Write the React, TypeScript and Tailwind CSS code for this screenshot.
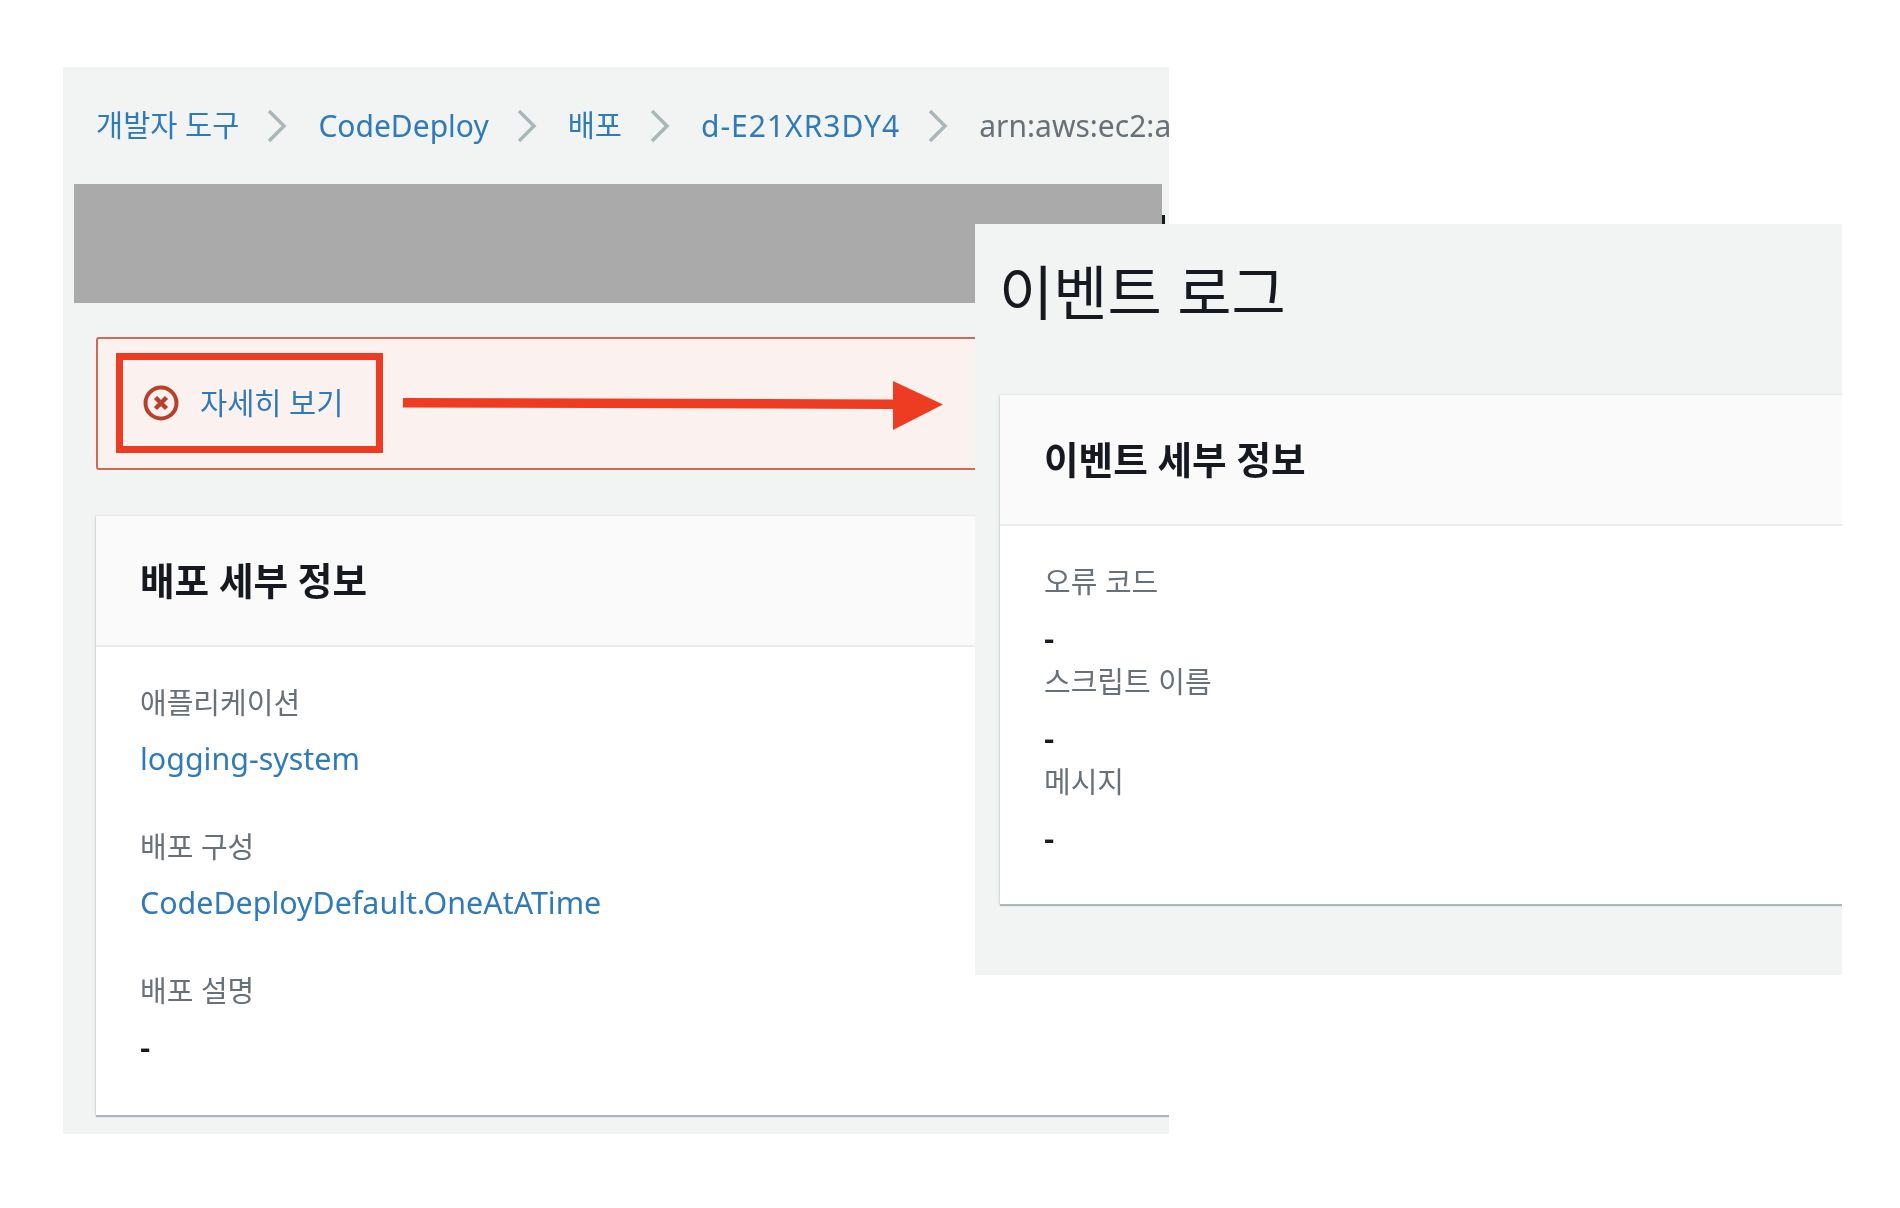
const font = 'font-["Noto_Sans","Noto_Sans_CJK_KR",sans-serif]'

function Chevron() {
  return (
    <svg width="20" height="34" viewBox="0 0 20 34" fill="none" className="shrink-0 mr-[3px]">
      <path d="M2 2l15 15L2 32" stroke="#aab7b8" strokeWidth="3.5" />
    </svg>
  )
}

function ErrorIcon() {
  return (
    <svg width="36" height="36" viewBox="0 0 36 36" fill="none" className="shrink-0">
      <circle cx="18" cy="18" r="15.500" stroke="#b8402a" strokeWidth="4" />
      <path d="M12.500 12.500l11 11M23.500 12.500l-11 11" stroke="#b8402a" strokeWidth="4.500" />
    </svg>
  )
}

function Breadcrumb() {
  return (
    <nav className="h-[117px] pl-[33px] flex items-center gap-[28px] text-[30px] text-[#2f7ab8] whitespace-nowrap blur-[0.5px]">
      <span className="text-[29.5px]">개발자 도구</span>
      <Chevron />
      <span>CodeDeploy</span>
      <Chevron />
      <span className="text-[29.5px]">배포</span>
      <Chevron />
      <span className="tracking-[1px]">d-E21XR3DY4</span>
      <Chevron />
      <span className="text-[#687078]">arn:aws:ec2:ap-northeast-2</span>
    </nav>
  )
}

function Field({ label, value, link, className }: { label: string; value: string; link?: boolean; className?: string }) {
  return (
    <div className={`blur-[0.4px] ${className ?? ''}`}>
      <div className="text-[29px] leading-[40px] text-[#687078]">{label}</div>
      <div className={`mt-[16px] leading-[40px] ${link ? 'text-[30.400px] text-[#2f7ab8]' : 'text-[32px] font-semibold text-[#16191f]'}`}>{value}</div>
    </div>
  )
}

function CardHeader({ title }: { title: string }) {
  return (
    <div className="h-[131px] pt-[2px] px-[44px] flex items-center bg-[#fafafa] border-b-2 border-[#eaeded] text-[37.600px] font-bold text-[#16191f]">
      <span className="blur-[0.4px]">{title}</span>
    </div>
  )
}

export default function App() {
  return (
    <div className={`relative w-[1900px] h-[1208px] bg-white overflow-hidden pt-[67px] pl-[63px] ${font}`}>
      <div className="w-[1106px] h-[1067px] bg-[#f2f3f3] overflow-hidden">
        <Breadcrumb />
        <div className="ml-[11px] w-[1088px] h-[119px] bg-[#aaaaaa]" />

        <div className="mt-[34px] ml-[33px] w-[1200px] h-[133px] pl-[18px] pt-[14px] rounded-l-[3px] border-2 border-[#cf6a58] bg-[#fbf2f0]">
          <div className="w-[267px] h-[100px] border-[7px] border-[#ed3c22] pl-[20px] flex items-center gap-[21px] text-[29.500px] text-[#2f7ab8] whitespace-nowrap">
            <ErrorIcon />
            <span className="blur-[0.5px]">자세히 보기</span>
          </div>
        </div>

        <div className="mt-[46px] ml-[33px] w-[1200px] h-[599px] bg-white shadow-[0_2px_1px_#aab7b8,-1px_0_2px_#d5dbdb]">
          <CardHeader title="배포 세부 정보" />
          <div className="px-[44px] pt-[36px]">
            <Field label="애플리케이션" value="logging-system" link />
            <Field label="배포 구성" value="CodeDeployDefault.OneAtATime" link className="mt-[48px]" />
            <Field label="배포 설명" value="-" className="mt-[48px]" />
          </div>
        </div>
      </div>

      {/* black tick left at the edge of the redacted band */}
      <div className="absolute left-[1162px] top-[215px] w-[3px] h-[12px] bg-[#16191f]" />

      {/* pasted event log panel */}
      <div className="absolute left-[975px] top-[224px] w-[867px] h-[751px] bg-[#f2f3f3] overflow-hidden">
        <h1 className="ml-[24px] h-[171px] pb-[34px] flex items-center text-[59px] text-[#16191f]">
          <span className="blur-[0.4px]">이벤트 로그</span>
        </h1>
        <div className="ml-[25px] w-[900px] h-[509px] bg-white shadow-[0_2px_1px_#aab7b8,-1px_0_2px_#d5dbdb]">
          <CardHeader title="이벤트 세부 정보" />
          <div className="px-[44px] pt-[36px]">
            <Field label="오류 코드" value="-" />
            <Field label="스크립트 이름" value="-" className="mt-[4px]" />
            <Field label="메시지" value="-" className="mt-[4px]" />
          </div>
        </div>
      </div>

      {/* annotation arrow */}
      <svg className="absolute left-[403px] top-[379px]" width="542" height="54" viewBox="0 0 542 54">
        <path d="M0 19L491 20.500V30L0 28.500Z" fill="#ed3c22" />
        <path d="M490 2L540 25.500L490 51Z" fill="#ed3c22" />
      </svg>
    </div>
  )
}
